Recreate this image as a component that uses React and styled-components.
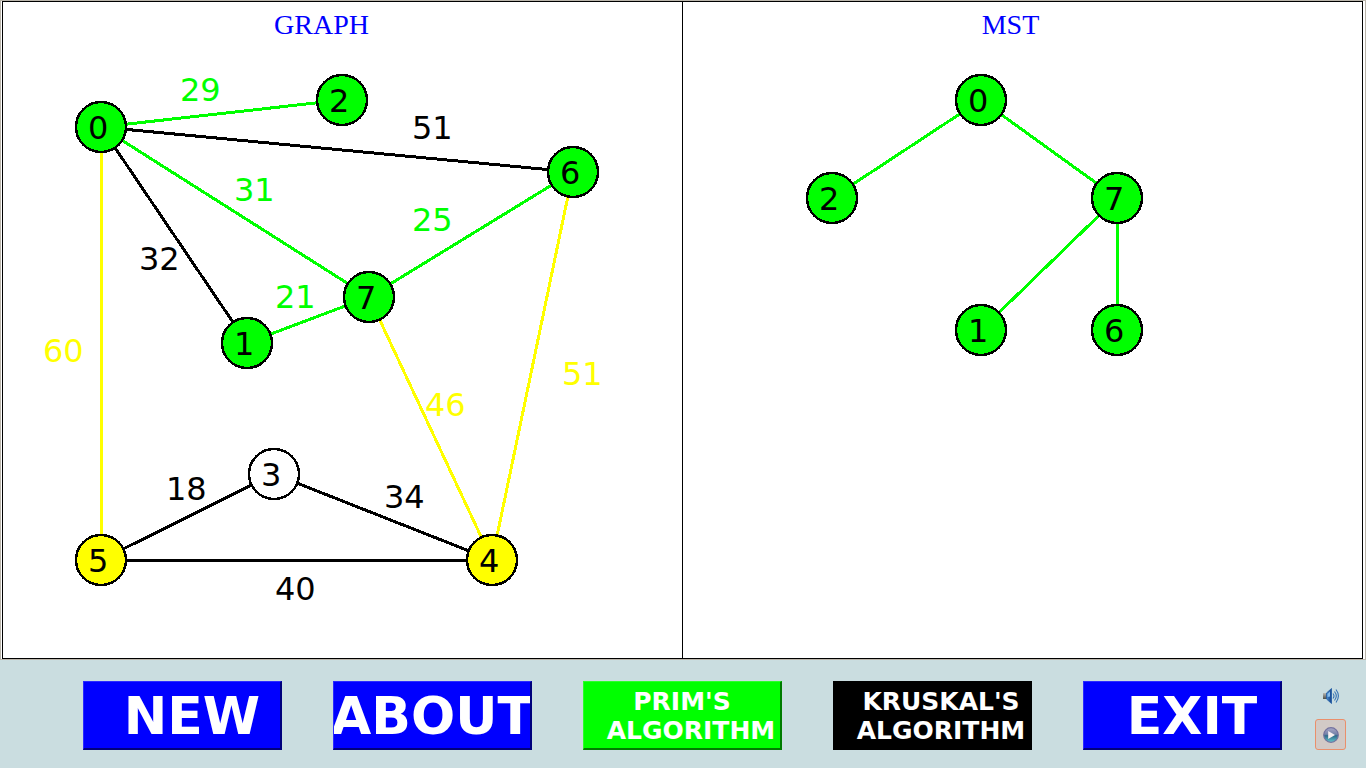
import React from "react";
import styled, { createGlobalStyle } from "styled-components";

const GlobalStyle = createGlobalStyle`
  * { box-sizing: border-box; }
  body {
    margin: 0;
    background: #cadde0;
    font-family: "DejaVu Sans", sans-serif;
  }
`;

const Page = styled.div`
  display: flex;
  flex-direction: column;
  min-height: 100vh;
`;

const BoardFrame = styled.main`
  flex: 1;
  display: flex;
  padding: 0 2px 0 1px;
  background: #fff;
  border: 1px solid #bab5ab;
`;

const Board = styled.div`
  flex: 1;
  display: flex;
  border: 1px solid #000;
`;

const Pane = styled.section`
  flex: 1 1 0;
  min-width: 0;

  & + & {
    border-left: 1px solid #000;
  }
`;

const PaneTitle = styled.h2`
  margin: 0;
  padding-top: 7px;
  padding-right: ${(p) => p.$shift}px;
  height: 46px;
  font: 400 28px/32px "Liberation Serif", serif;
  text-align: center;
  color: #0000ff;
`;

const Drawing = styled.svg`
  display: block;
  width: 100%;
  font-size: 32px;
`;

const Edge = styled.line`
  stroke: ${(p) => p.$color};
  stroke-width: 3;
  shape-rendering: crispEdges;
`;

const NodeDisc = styled.circle`
  fill: ${(p) => p.$color};
  stroke: #000;
  stroke-width: 2.5;
  shape-rendering: crispEdges;
`;

const Toolbar = styled.footer`
  display: flex;
  align-items: flex-end;
  gap: 33px;
  padding: 20px 20px 18px 83px;
`;

const Actions = styled.div`
  flex: 1;
  display: grid;
  grid-template-columns: repeat(5, minmax(0, 1fr));
  gap: 51px;
`;

const ActionButton = styled.button`
  display: flex;
  flex-direction: column;
  align-items: center;
  justify-content: center;
  height: 69px;
  padding: 2px 0 0;
  overflow: hidden;
  border: 2px solid;
  border-width: 1px 2px 2px 1px;
  border-color: ${(p) => p.$edge};
  background: ${(p) => p.$color};
  color: #fff;
  font-family: inherit;
  font-weight: 700;
  font-size: ${(p) => (p.$small ? 25 : 52)}px;
  line-height: ${(p) => (p.$small ? 29 : 60)}px;
  white-space: nowrap;
`;

const ButtonLine = styled.span`
  padding-left: ${(p) => p.$indent || 0}px;
`;

const Controls = styled.div`
  display: flex;
  flex-direction: column;
  gap: 8px;
`;

const IconButton = styled.button`
  display: grid;
  place-items: center;
  width: 31px;
  height: 31px;
  padding: 0;
  border: 1px solid ${(p) => (p.$active ? "#ea8f6b" : "transparent")};
  border-radius: 3px;
  background: ${(p) => (p.$active ? "#d2cac6" : "transparent")};
`;

const GREEN = "#00ff00";
const YELLOW = "#ffff00";
const BLACK = "#000000";
const WHITE = "#ffffff";

const graph = {
  nodes: {
    0: [101, 127, GREEN],
    1: [247, 343, GREEN],
    2: [342, 100, GREEN],
    3: [274, 474, WHITE],
    4: [492, 560, YELLOW],
    5: [101, 560, YELLOW],
    6: [573, 172, GREEN],
    7: [369, 297, GREEN],
  },
  edges: [
    [0, 2, GREEN, 29, 180, 101],
    [0, 6, BLACK, 51, 412, 139],
    [0, 7, GREEN, 31, 234, 201],
    [0, 1, BLACK, 32, 139, 270],
    [0, 5, YELLOW, 60, 43, 362],
    [7, 6, GREEN, 25, 412, 231],
    [1, 7, GREEN, 21, 275, 308],
    [7, 4, YELLOW, 46, 425, 416],
    [6, 4, YELLOW, 51, 562, 385],
    [5, 3, BLACK, 18, 166, 500],
    [3, 4, BLACK, 34, 384, 508],
    [5, 4, BLACK, 40, 275, 600],
  ],
};

const tree = {
  nodes: {
    0: [981, 100, GREEN],
    1: [981, 330, GREEN],
    2: [832, 198, GREEN],
    6: [1117, 330, GREEN],
    7: [1117, 198, GREEN],
  },
  edges: [
    [0, 2, GREEN],
    [0, 7, GREEN],
    [7, 1, GREEN],
    [7, 6, GREEN],
  ],
};

function Network({ data, viewBox, label }) {
  return (
    <Drawing viewBox={viewBox} role="img" aria-label={label}>
      {data.edges.map(([from, to, color]) => (
        <Edge
          key={`${from}-${to}`}
          x1={data.nodes[from][0]}
          y1={data.nodes[from][1]}
          x2={data.nodes[to][0]}
          y2={data.nodes[to][1]}
          $color={color}
        />
      ))}
      {data.edges.map(([from, to, color, weight, x, y]) =>
        weight ? (
          <text key={`${from}-${to}`} x={x} y={y} fill={color}>
            {weight}
          </text>
        ) : null
      )}
      {Object.entries(data.nodes).map(([id, [x, y, color]]) => (
        <g key={id}>
          <NodeDisc cx={x} cy={y} r="25" $color={color} />
          <text x={x - 13} y={y + 12}>
            {id}
          </text>
        </g>
      ))}
    </Drawing>
  );
}

function SpeakerIcon() {
  return (
    <svg width="16" height="16" viewBox="0 0 16 16" aria-hidden="true">
      <defs>
        <linearGradient id="horn" x1="0" y1="0" x2="1" y2="0">
          <stop offset="0" stopColor="#4b8fd0" />
          <stop offset="1" stopColor="#123f86" />
        </linearGradient>
        <linearGradient id="magnet" x1="0" y1="0" x2="0" y2="1">
          <stop offset="0" stopColor="#b9bab6" />
          <stop offset="1" stopColor="#4a4c48" />
        </linearGradient>
      </defs>
      <path d="M0 5h4v6H0z" fill="url(#magnet)" />
      <path d="M3.5 5 8.5 0.5v15L3.5 11z" fill="url(#horn)" stroke="#1f5ba3" strokeWidth="0.8" />
      <path d="M4.5 6 7 3.500v5L4.500 9z" fill="#86bdec" />
      <path
        d="M10 5.500q2 2.500 0 5M11.500 3.500q3.600 4.500 0 9M13 1.500q4.800 6.500 0 13"
        fill="none"
        stroke="#3873b3"
        strokeWidth="1.100"
      />
    </svg>
  );
}

function PlayIcon() {
  return (
    <svg width="16" height="16" viewBox="0 0 16 16" aria-hidden="true">
      <defs>
        <linearGradient id="orb" x1="0" y1="0" x2="0" y2="1">
          <stop offset="0" stopColor="#aaa8c8" />
          <stop offset="0.45" stopColor="#7482a8" />
          <stop offset="0.55" stopColor="#2f6a8a" />
          <stop offset="1" stopColor="#62c9cf" />
        </linearGradient>
      </defs>
      <circle cx="8" cy="8" r="7.300" fill="url(#orb)" stroke="#73729f" strokeWidth="1.200" />
      <path d="M5.200 4v8l6.800-4z" fill="#f7f0f0" />
    </svg>
  );
}

const BLUE_EDGE = "#2b2bff #00007c #00007c #2b2bff";
const GREEN_EDGE = "#2bff2b #007c00 #007c00 #2bff2b";

export default function App() {
  return (
    <>
      <GlobalStyle />
      <Page>
        <BoardFrame>
          <Board>
            <Pane>
              <PaneTitle $shift={42}>GRAPH</PaneTitle>
              <Network data={graph} viewBox="3 48 679 600" label="Weighted graph" />
            </Pane>
            <Pane>
              <PaneTitle $shift={24}>MST</PaneTitle>
              <Network data={tree} viewBox="683 48 679 600" label="Minimum spanning tree" />
            </Pane>
          </Board>
        </BoardFrame>
        <Toolbar>
          <Actions>
            <ActionButton type="button" $color="#0000ff" $edge={BLUE_EDGE}>
              <ButtonLine $indent={20}>NEW</ButtonLine>
            </ActionButton>
            <ActionButton type="button" $color="#0000ff" $edge={BLUE_EDGE}>
              <ButtonLine>ABOUT</ButtonLine>
            </ActionButton>
            <ActionButton type="button" $small $color={GREEN} $edge={GREEN_EDGE}>
              <ButtonLine>PRIM'S</ButtonLine>
              <ButtonLine $indent={18}>ALGORITHM</ButtonLine>
            </ActionButton>
            <ActionButton type="button" $small $color={BLACK} $edge={BLACK}>
              <ButtonLine $indent={18}>KRUSKAL'S</ButtonLine>
              <ButtonLine $indent={18}>ALGORITHM</ButtonLine>
            </ActionButton>
            <ActionButton type="button" $color="#0000ff" $edge={BLUE_EDGE}>
              <ButtonLine $indent={20}>EXIT</ButtonLine>
            </ActionButton>
          </Actions>
          <Controls>
            <IconButton type="button" aria-label="Sound">
              <SpeakerIcon />
            </IconButton>
            <IconButton type="button" aria-label="Play" $active>
              <PlayIcon />
            </IconButton>
          </Controls>
        </Toolbar>
      </Page>
    </>
  );
}
